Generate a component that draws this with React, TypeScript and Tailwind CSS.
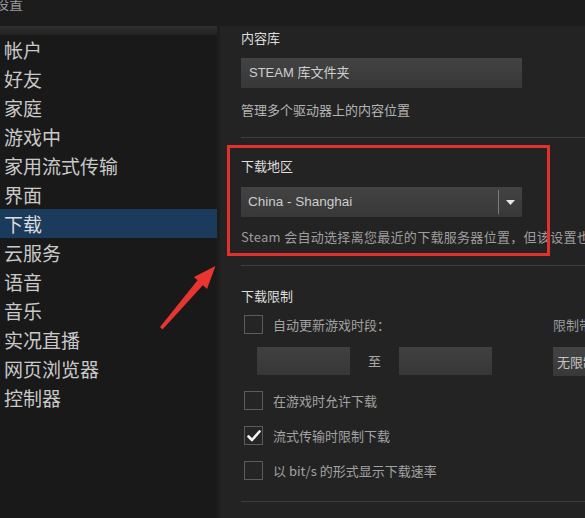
const navItems = [
  "帐户",
  "好友",
  "家庭",
  "游戏中",
  "家用流式传输",
  "界面",
  "下载",
  "云服务",
  "语音",
  "音乐",
  "实况直播",
  "网页浏览器",
  "控制器",
];

function Checkbox({ checked, label }: { checked?: boolean; label: string }) {
  return (
    <div className="flex items-center h-[19px] ml-[3px]">
      <div className="w-[19px] h-[19px] border border-[#5c5c5c] bg-[#252525] flex items-center justify-center shrink-0">
        {checked && (
          <svg width="14" height="12" viewBox="0 0 14 12">
            <path d="M1.5 6.5 L5 10 L12.5 1.5" fill="none" stroke="#f2f2f2" strokeWidth="2.6" strokeLinecap="round" strokeLinejoin="round" />
          </svg>
        )}
      </div>
      <span className="ml-[10px] text-[13px] leading-[18px] text-[#a2a2a2] whitespace-nowrap">{label}</span>
    </div>
  );
}

function Separator() {
  return <div className="h-px bg-[#3e3e3e] w-full" />;
}

export default function App() {
  return (
    <div
      className="relative w-[585px] h-[518px] overflow-hidden bg-[#1b1b1c]"
      style={{ fontFamily: '"Noto Sans CJK SC", "Liberation Sans", sans-serif' }}
    >
      {/* Title bar */}
      <div className="h-[26px] bg-[#1c1c1d] overflow-hidden">
        <div className="-ml-[5px] -mt-[7px] text-[14px] leading-[20px] text-[#9a9a9a]">设置</div>
      </div>

      <div className="flex h-[492px]">
        {/* Sidebar */}
        <aside className="w-[217px] shrink-0 bg-[#19191a]">
          <div className="h-[9px] bg-gradient-to-b from-[#2f2f2f] to-[#222223]" />
          {navItems.map((item) => (
            <div
              key={item}
              className={`h-[29px] pl-[4px] flex items-center text-[19px] leading-[29px] text-[#c9c9c9] whitespace-nowrap ${
                item === "下载" ? "bg-[#1a3b5c] text-[#dcdcdc]" : ""
              }`}
            >
              {item}
            </div>
          ))}
        </aside>

        {/* Settings panel */}
        <main className="flex-1 min-w-0 bg-[#232323] border-l-[3px] border-[#1d1d1d] pl-[21px] pt-[3px] overflow-hidden">
          <div className="text-[13px] leading-[18px] text-[#dedede]">内容库</div>
          <div className="mt-[11px] h-[30px] w-[281px] bg-gradient-to-b from-[#434343] to-[#383838] flex items-center pl-[8px] text-[13px] text-[#cfcfcf] whitespace-nowrap">
            <span style={{ fontFamily: '"Liberation Sans", "Noto Sans CJK SC", sans-serif' }}>STEAM 库文件夹</span>
          </div>
          <div className="mt-[13px] text-[13px] leading-[18px] text-[#b4b4b4]">管理多个驱动器上的内容位置</div>
          <div className="mt-[18px]">
            <Separator />
          </div>

          {/* Download region */}
          <div className="mt-[19px] text-[13px] leading-[18px] text-[#dedede]">下载地区</div>
          <div className="mt-[12px] h-[30px] w-[281px] bg-gradient-to-b from-[#434343] to-[#383838] flex items-center">
            <span
              className="pl-[7px] flex-1 text-[13.5px] text-[#cdcdcd] whitespace-nowrap"
              style={{ fontFamily: '"Liberation Sans", "Noto Sans CJK SC", sans-serif' }}
            >
              China - Shanghai
            </span>
            <div className="w-px h-[24px] bg-[#7a7a7a]" />
            <div className="w-[23px] flex items-center justify-center">
              <svg width="9" height="5" viewBox="0 0 9 5">
                <path d="M0 0 H9 L4.5 5 Z" fill="#e8e8e8" />
              </svg>
            </div>
          </div>
          <div className="mt-[11px] text-[13px] leading-[18px] tracking-[0.3px] text-[#9e9e9e] whitespace-nowrap">
            Steam 会自动选择离您最近的下载服务器位置，但该设置也可以手动更改
          </div>
          <div className="mt-[19px]">
            <Separator />
          </div>

          {/* Download limits */}
          <div className="mt-[21px] text-[13px] leading-[18px] text-[#dedede]">下载限制</div>
          <div className="mt-[10px] flex items-center">
            <div className="w-[312px] shrink-0">
              <Checkbox label="自动更新游戏时段：" />
            </div>
            <span className="text-[13px] leading-[18px] text-[#9c9c9c] whitespace-nowrap">限制带宽</span>
          </div>
          <div className="mt-[13px] flex items-start">
            <div className="w-[312px] shrink-0 flex items-center pl-[16px]">
              <div className="w-[93px] h-[28px] bg-gradient-to-b from-[#404040] to-[#373737]" />
              <span className="w-[49px] text-center text-[13px] text-[#a8a8a8]">至</span>
              <div className="w-[93px] h-[28px] bg-gradient-to-b from-[#404040] to-[#373737]" />
            </div>
            <div className="w-[80px] h-[29px] shrink-0 bg-gradient-to-b from-[#434343] to-[#383838] flex items-center pl-[4px] text-[13px] text-[#c4c4c4] whitespace-nowrap">
              无限制
            </div>
          </div>
          <div className="mt-[15px]">
            <Checkbox label="在游戏时允许下载" />
          </div>
          <div className="mt-[16px]">
            <Checkbox checked label="流式传输时限制下载" />
          </div>
          <div className="mt-[16px]">
            <Checkbox label="以 bit/s 的形式显示下载速率" />
          </div>
          <div className="mt-[21px]">
            <Separator />
          </div>
        </main>
      </div>

      {/* Annotation: highlight box */}
      <div className="absolute left-[227px] top-[145px] w-[323px] h-[111px] border-[3px] border-[#e2312d] pointer-events-none" />

      {/* Annotation: arrow */}
      <svg className="absolute left-0 top-0 pointer-events-none" width="585" height="518">
        <polygon points="160,327 162.5,329.5 203.5,284.5 198,279.8" fill="#e8352f" />
        <polygon points="215.5,266 194,277 207,289" fill="#e8352f" />
      </svg>
    </div>
  );
}
